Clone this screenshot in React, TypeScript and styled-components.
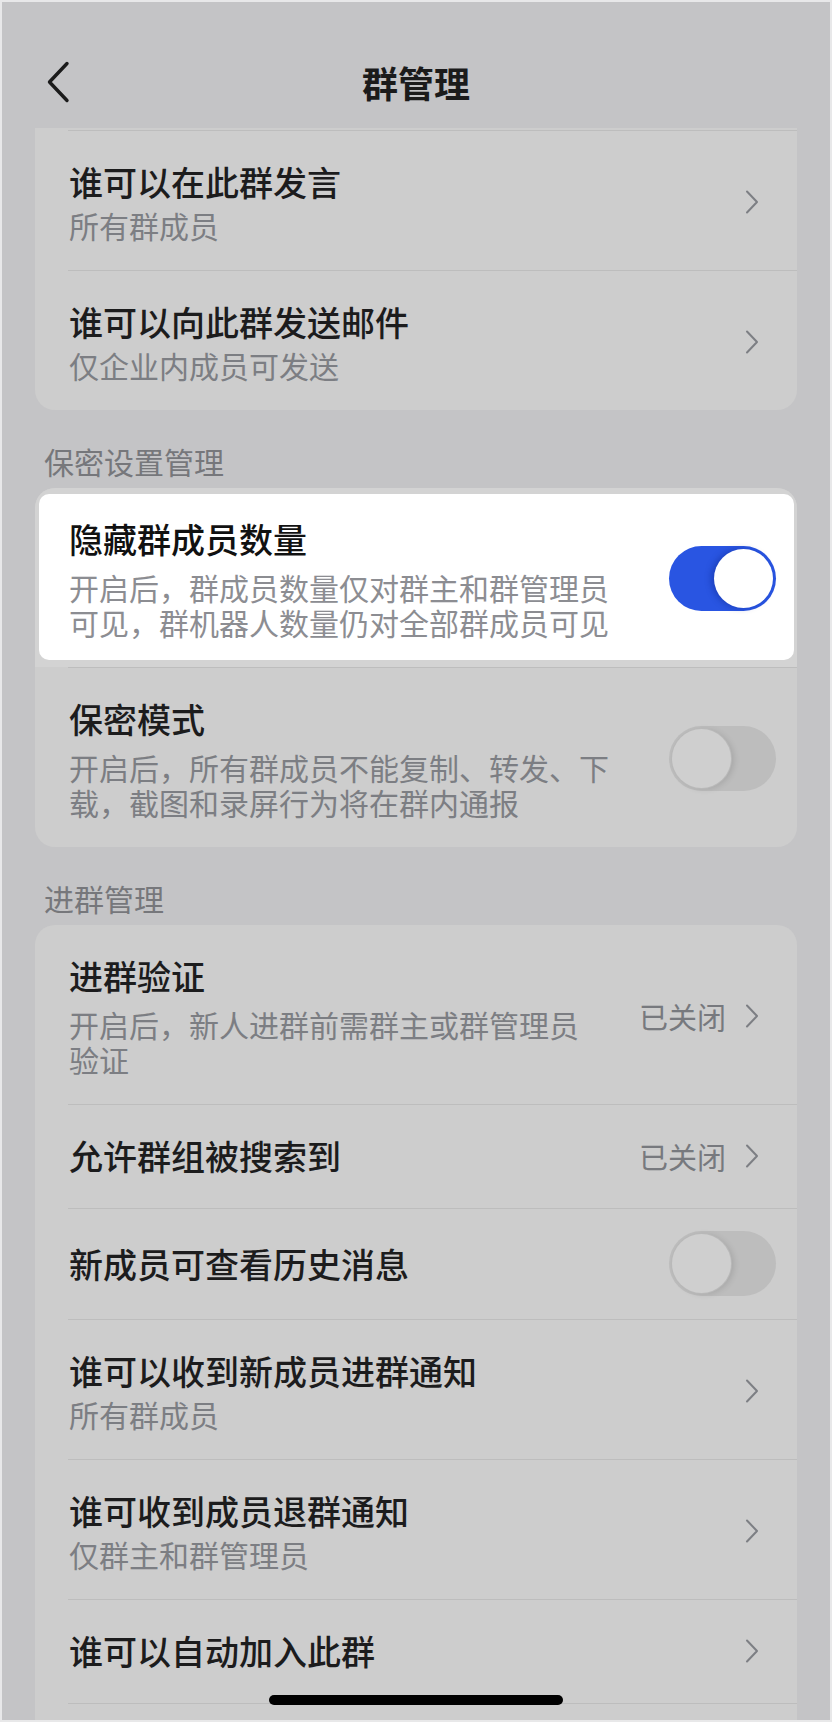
import { createGlobalStyle, styled } from 'styled-components';

type Trail = 'chevron' | 'on' | 'off';

interface ISetting {
  title: string;
  note?: string;
  desc?: string;
  value?: string;
  trail: Trail;
}

const messageRules: ISetting[] = [
  { title: '谁可以在此群发言', note: '所有群成员', trail: 'chevron' },
  { title: '谁可以向此群发送邮件', note: '仅企业内成员可发送', trail: 'chevron' },
];

const joinRules: ISetting[] = [
  { title: '进群验证', desc: '开启后，新人进群前需群主或群管理员验证', value: '已关闭', trail: 'chevron' },
  { title: '允许群组被搜索到', value: '已关闭', trail: 'chevron' },
  { title: '新成员可查看历史消息', trail: 'off' },
  { title: '谁可以收到新成员进群通知', note: '所有群成员', trail: 'chevron' },
  { title: '谁可收到成员退群通知', note: '仅群主和群管理员', trail: 'chevron' },
  { title: '谁可以自动加入此群', trail: 'chevron' },
];

function BackIcon() {
  return (
    <svg width="24" height="44" viewBox="0 0 24 44" fill="none">
      <polyline
        points="21,3.5 3.5,22 21,40.5"
        stroke="#1b1b1b"
        strokeWidth="3.4"
        strokeLinecap="round"
        strokeLinejoin="round"
      />
    </svg>
  );
}

function ChevronIcon() {
  return (
    <svg width="14" height="24" viewBox="0 0 14 24" fill="none">
      <polyline
        points="2,1.5 12,12 2,22.5"
        stroke="#7d7f84"
        strokeWidth="2"
        strokeLinecap="round"
        strokeLinejoin="round"
      />
    </svg>
  );
}

function Trailing({ item }: { item: ISetting }) {
  if (item.trail === 'chevron') {
    return (
      <Style.Trail>
        {item.value && <Style.Value>{item.value}</Style.Value>}
        <Style.Chevron>
          <ChevronIcon />
        </Style.Chevron>
      </Style.Trail>
    );
  }
  return (
    <Style.Switch $on={item.trail === 'on'}>
      <Style.Knob $on={item.trail === 'on'} />
    </Style.Switch>
  );
}

function SettingRow({ item, rule }: { item: ISetting; rule: boolean }) {
  const kind = item.desc ? 'desc' : item.note ? 'note' : 'single';
  return (
    <Style.Row $rule={rule} $kind={kind} $toggle={item.trail !== 'chevron'}>
      <Style.TextBlock>
        <Style.Title>{item.title}</Style.Title>
        {item.note && <Style.Note>{item.note}</Style.Note>}
        {item.desc && <Style.Desc>{item.desc}</Style.Desc>}
      </Style.TextBlock>
      <Trailing item={item} />
    </Style.Row>
  );
}

export default function App() {
  return (
    <>
      <GlobalStyle />
      <Style.Screen>
        <Style.NavBar>
          <Style.Back>
            <BackIcon />
          </Style.Back>
          <Style.NavTitle>群管理</Style.NavTitle>
          <span />
        </Style.NavBar>

        <Style.Content>
          <Style.Card $cutTop>
            {messageRules.map((item) => (
              <SettingRow key={item.title} item={item} rule />
            ))}
          </Style.Card>

          <Style.SectionTitle>保密设置管理</Style.SectionTitle>
          <Style.Card>
            <Style.Spotlight>
              <Style.SpotRow>
                <Style.TextBlock>
                  <Style.Title $strong>隐藏群成员数量</Style.Title>
                  <Style.Desc $light>开启后，群成员数量仅对群主和群管理员可见，群机器人数量仍对全部群成员可见</Style.Desc>
                </Style.TextBlock>
                <Style.Switch $on>
                  <Style.Knob $on />
                </Style.Switch>
              </Style.SpotRow>
            </Style.Spotlight>
            <SettingRow
              item={{
                title: '保密模式',
                desc: '开启后，所有群成员不能复制、转发、下载，截图和录屏行为将在群内通报',
                trail: 'off',
              }}
              rule
            />
          </Style.Card>

          <Style.SectionTitle>进群管理</Style.SectionTitle>
          <Style.Card>
            {joinRules.map((item, i) => (
              <SettingRow key={item.title} item={item} rule={i > 0} />
            ))}
            <Style.CardRest />
          </Style.Card>
        </Style.Content>

        <Style.HomeBar />
      </Style.Screen>
    </>
  );
}

const GlobalStyle = createGlobalStyle`
  * {
    box-sizing: border-box;
  }

  body {
    margin: 0;
    background: #c4c4c6;
    font-family: 'Noto Sans CJK SC', 'Noto Sans', sans-serif;
  }
`;

const Style = {
  Screen: styled.div`
    position: relative;
    width: 832px;
    height: 1722px;
    overflow: hidden;
    border: 2px solid #e8e8e9;
    background: #c4c4c6;
  `,

  NavBar: styled.header`
    display: grid;
    grid-template-columns: 1fr auto 1fr;
    align-items: center;
    height: 126px;
    padding: 34px 44px 0;
  `,

  Back: styled.div`
    display: flex;
    align-items: center;
  `,

  NavTitle: styled.h1`
    margin: 0;
    font-size: 36px;
    line-height: 44px;
    font-weight: 600;
    color: #1b1b1b;
  `,

  Content: styled.main`
    padding: 0 33px;
  `,

  Card: styled.section<{ $cutTop?: boolean }>`
    overflow: hidden;
    background: #cdcdcd;
    border-radius: ${(props) => (props.$cutTop ? '0 0 20px 20px' : '20px')};
    padding-top: ${(props) => (props.$cutTop ? '2px' : '0')};
  `,

  SectionTitle: styled.h2`
    margin: 0;
    padding: 31px 0 7px 9px;
    font-size: 30px;
    line-height: 40px;
    font-weight: 400;
    color: #76777b;
  `,

  Row: styled.div<{ $rule: boolean; $kind: 'single' | 'note' | 'desc'; $toggle: boolean }>`
    display: flex;
    align-items: center;
    margin-left: 33px;
    padding: 29px 21px ${(props) => (props.$kind === 'single' ? '30px' : '27px')} 1px;
    min-height: ${(props) => (props.$toggle ? '110px' : '0')};
    border-top: ${(props) => (props.$rule ? '1px solid #bdbdbd' : 'none')};
  `,

  Spotlight: styled.div`
    padding: 6px 3px 7px 4px;
    background: #d3d3d3;
  `,

  SpotRow: styled.div`
    display: flex;
    align-items: center;
    padding: 23px 18px 20px 30px;
    background: #ffffff;
    border-radius: 10px;
  `,

  TextBlock: styled.div`
    flex: 1;
    min-width: 0;
    margin-right: 45px;
  `,

  Title: styled.div<{ $strong?: boolean }>`
    font-size: 34px;
    line-height: 44px;
    font-weight: 500;
    color: ${(props) => (props.$strong ? '#111111' : '#1c1c1d')};
  `,

  Note: styled.div`
    margin-top: 3px;
    font-size: 30px;
    line-height: 36px;
    color: #7c7e83;
  `,

  Desc: styled.div<{ $light?: boolean }>`
    margin-top: 9px;
    font-size: 30px;
    line-height: 35px;
    color: ${(props) => (props.$light ? '#8c8d92' : '#7c7e83')};
  `,

  Trail: styled.div`
    display: flex;
    align-items: center;
    gap: 19px;
    margin-right: 17px;
  `,

  Value: styled.span`
    font-size: 29px;
    line-height: 36px;
    color: #77797e;
  `,

  Chevron: styled.span`
    display: flex;
  `,

  Switch: styled.div<{ $on: boolean }>`
    flex: none;
    display: flex;
    justify-content: ${(props) => (props.$on ? 'flex-end' : 'flex-start')};
    width: 107px;
    height: 65px;
    margin: -7px 0;
    padding: 3px;
    border-radius: 33px;
    background: ${(props) => (props.$on ? '#2955e2' : '#bdbdbd')};
  `,

  Knob: styled.div<{ $on: boolean }>`
    width: 59px;
    height: 59px;
    border-radius: 50%;
    background: ${(props) => (props.$on ? '#ffffff' : '#cfcfcf')};
    box-shadow: ${(props) =>
      props.$on
        ? '-3px 0 6px rgba(10, 30, 120, 0.35)'
        : '0 0 0 1px #b9b9b9, 3px 1px 6px rgba(0, 0, 0, 0.12)'};
  `,

  CardRest: styled.div`
    height: 60px;
    margin-left: 33px;
    border-top: 1px solid #bdbdbd;
  `,

  HomeBar: styled.div`
    position: absolute;
    left: 267px;
    bottom: 15px;
    width: 294px;
    height: 10px;
    border-radius: 5px;
    background: #000000;
  `,
};
